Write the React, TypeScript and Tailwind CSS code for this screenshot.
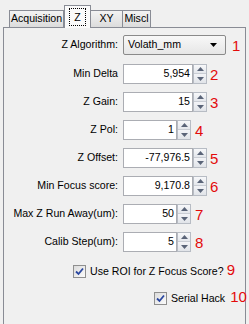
import React from "react";

const font = { fontFamily: '"Liberation Sans", Arial, sans-serif' };

function Num({ n, cls }: { n: string; cls: string }) {
  return <span className={`whitespace-nowrap text-[15px] leading-none text-[#e30b0b] ${cls}`}>{n}</span>;
}

function Arrows() {
  return (
    <div className="flex h-[20px] w-[14px] flex-col border border-[#b7bcc4] bg-[#eef0f3]">
      <div className="flex h-1/2 items-center justify-center border-b border-[#c9cdd4] bg-gradient-to-b from-[#f7f8fa] to-[#e4e7ec]">
        <svg width="7" height="4" viewBox="0 0 7 4">
          <path d="M0 4 L3.5 0 L7 4 Z" fill="#5a6478" />
        </svg>
      </div>
      <div className="flex h-1/2 items-center justify-center bg-gradient-to-b from-[#f3f4f7] to-[#e1e4e9]">
        <svg width="7" height="4" viewBox="0 0 7 4">
          <path d="M0 0 L7 0 L3.5 4 Z" fill="#5a6478" />
        </svg>
      </div>
    </div>
  );
}

function Row({
  label,
  value,
  wide,
  n,
}: {
  label: string;
  value: string;
  wide: boolean;
  n: string;
}) {
  return (
    <div className="flex h-[20px] items-center">
      <div className="w-[115px] whitespace-nowrap pr-[1px] text-right text-black">{label}</div>
      <div className="ml-[4px] flex items-center">
        <div
          className={`flex h-[20px] items-center justify-end border border-[#abadb3] bg-white pr-[2px] text-black ${
            wide ? "w-[70px]" : "w-[54px]"
          }`}
        >
          {value}
        </div>
        <Arrows />
        <Num n={n} cls={wide ? "ml-[3px]" : "ml-[4px]"} />
      </div>
    </div>
  );
}

function Check() {
  return (
    <div className="flex h-[13px] w-[13px] shrink-0 items-center justify-center border border-[#8f8f8f] bg-gradient-to-br from-[#dcdcdc] to-[#fbfbfb]">
      <svg width="9" height="9" viewBox="0 0 9 9">
        <path d="M1 4.5 L3.5 7 L8 1.5" stroke="#2a47a0" strokeWidth="1.8" fill="none" />
      </svg>
    </div>
  );
}

export default function App() {
  return (
    <div className="flex h-[324px] w-[249px] flex-col overflow-hidden bg-[#f0f0f0] text-[10.6px] text-black" style={font}>
      <div className="flex h-[27px] items-end pl-[9px]">
        <div className="flex h-[17px] w-[55px] items-center justify-center border border-b-0 border-[#898c95] bg-gradient-to-b from-[#f3f3f3] to-[#dcdcdc]">
          Acquisition
        </div>
        <div className="relative z-10 -mb-px flex h-[23px] w-[27px] items-start justify-center border border-b-0 border-[#898c95] bg-[#fafafa] pt-[2px]">
          <span className="border border-dotted border-black px-[4px] leading-[16px]">Z</span>
        </div>
        <div className="flex h-[17px] w-[32px] items-center justify-center border border-b-0 border-l-0 border-[#898c95] bg-gradient-to-b from-[#f3f3f3] to-[#dcdcdc]">
          XY
        </div>
        <div className="flex h-[17px] w-[28px] items-center justify-center border border-b-0 border-l-0 border-[#898c95] bg-gradient-to-b from-[#f3f3f3] to-[#dcdcdc]">
          Miscl
        </div>
      </div>
      <div className="ml-[3px] flex w-[243px] flex-1 flex-col border border-b-0 border-[#898c95] bg-[#f0f0f0] pt-[7px]">
        <div className="flex h-[20px] items-center">
          <div className="w-[115px] pr-[1px] text-right">Z Algorithm:</div>
          <div className="ml-[4px] flex h-[20px] w-[103px] items-center justify-between rounded-[2px] border border-[#8a8a8a] bg-gradient-to-b from-[#f8f8f8] to-[#e6e6e6] pl-[4px] pr-[8px]">
            <span>Volath_mm</span>
            <svg width="7" height="4" viewBox="0 0 7 4">
              <path d="M0 0 L7 0 L3.5 4 Z" fill="#000" />
            </svg>
          </div>
          <Num n="1" cls="ml-[6px]" />
        </div>
        <div className="mt-[9px] flex flex-col gap-[8px]">
          <Row label="Min Delta" value="5,954" wide n="2" />
          <Row label="Z Gain:" value="15" wide n="3" />
          <Row label="Z Pol:" value="1" wide={false} n="4" />
          <Row label="Z Offset:" value="-77,976.5" wide n="5" />
          <Row label="Min Focus score:" value="9,170.8" wide n="6" />
          <Row label="Max Z Run Away(um):" value="50" wide={false} n="7" />
          <Row label="Calib Step(um):" value="5" wide={false} n="8" />
        </div>
        <div className="mt-[12px] flex items-center whitespace-nowrap pl-[69px]">
          <Check />
          <span className="ml-[4px]">Use ROI for Z Focus Score?</span>
          <Num n="9" cls="ml-[3px] -mt-[4px]" />
        </div>
        <div className="mt-[11px] flex items-center whitespace-nowrap pl-[150px]">
          <Check />
          <span className="ml-[4px]">Serial Hack</span>
          <Num n="10" cls="ml-[5px] -mt-[4px]" />
        </div>
      </div>
    </div>
  );
}
